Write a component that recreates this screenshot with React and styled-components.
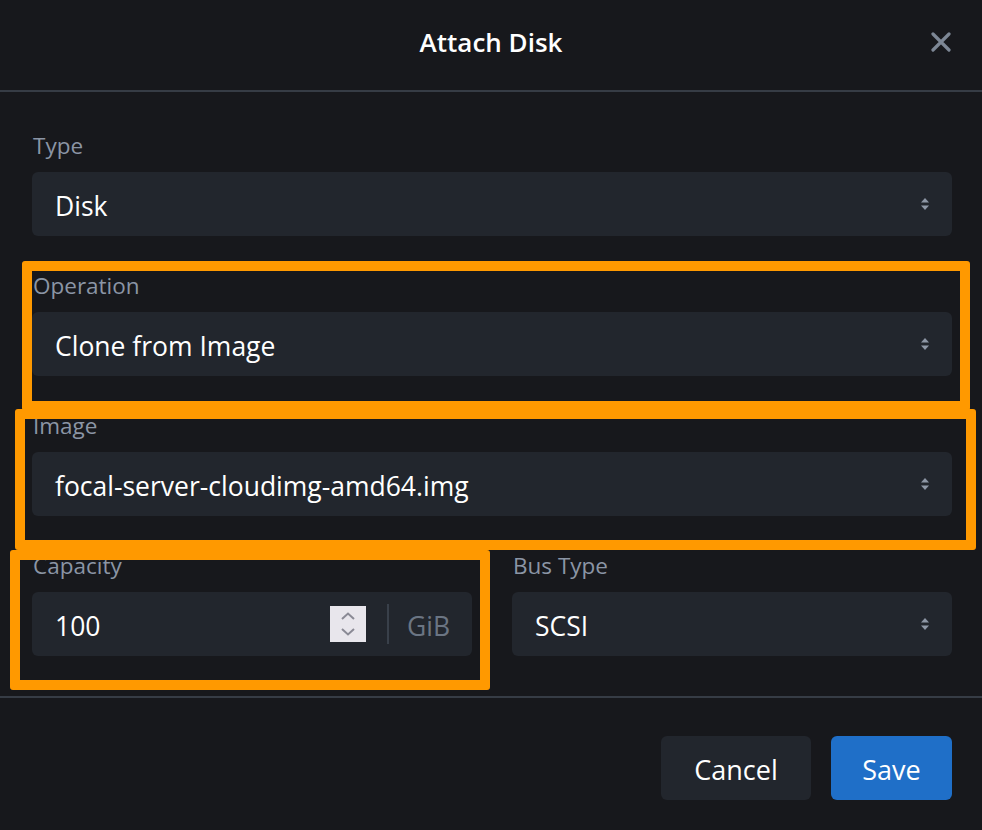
import React from "react";
import styled, { createGlobalStyle } from "styled-components";

const GlobalStyle = createGlobalStyle`
  html, body {
    margin: 0;
    padding: 0;
    background: #17181c;
  }
  body {
    font-family: "Open Sans", "Noto Sans", sans-serif;
    color: #ffffff;
  }
`;

const Modal = styled.div`
  position: relative;
  width: 982px;
  height: 830px;
  background: #17181c;
  display: flex;
  flex-direction: column;
`;

const Header = styled.div`
  display: flex;
  align-items: center;
  justify-content: center;
  position: relative;
  border-bottom: 2px solid #363c45;
  box-sizing: border-box;
  height: 92px;
  padding-bottom: 6px;
`;

const Title = styled.h2`
  margin: 0;
  font-size: 26px;
  line-height: 32px;
  font-weight: 600;
  color: #ffffff;
`;

const CloseButton = styled.button`
  position: absolute;
  right: 30px;
  top: 31px;
  width: 22px;
  height: 22px;
  padding: 0;
  border: none;
  background: none;
  display: flex;
  align-items: center;
  justify-content: center;
`;

const Body = styled.div`
  padding: 42px 30px 40px 32px;
  display: flex;
  flex-direction: column;
  gap: 38px;
  border-bottom: 2px solid #363c45;
`;

const Row = styled.div`
  display: grid;
  grid-template-columns: 1fr 1fr;
  gap: 40px;
`;

const Field = styled.div`
  display: flex;
  flex-direction: column;
`;

const Label = styled.label`
  font-size: 22.5px;
  line-height: 24px;
  color: #8b95a5;
  margin-bottom: 14px;
  padding-left: 1px;
`;

const Control = styled.div`
  height: 64px;
  background: #22262d;
  border-radius: 6px;
  display: flex;
  align-items: center;
  padding: 0 22px 0 23px;
  box-sizing: border-box;
`;

const Value = styled.span`
  flex: 1;
  font-size: 26.5px;
  line-height: 32px;
  padding-top: 3px;
  color: #ffffff;
`;

const Spinner = styled.div`
  width: 36px;
  height: 36px;
  background: #e8e6ec;
  display: flex;
  align-items: center;
  justify-content: center;
  margin-right: 21px;
`;

const Divider = styled.div`
  width: 2px;
  height: 40px;
  background: #39404a;
  margin-right: 18px;
`;

const Unit = styled.span`
  font-size: 26.5px;
  line-height: 32px;
  padding-top: 3px;
  color: #6b7583;
`;

const Footer = styled.div`
  flex: 1;
  display: flex;
  justify-content: flex-end;
  align-items: flex-start;
  gap: 20px;
  padding: 38px 30px 0 0;
`;

const Button = styled.button`
  height: 64px;
  padding: 2px 0 0;
  width: ${(p) => (p.primary ? "121px" : "150px")};
  border: none;
  border-radius: 6px;
  font-family: inherit;
  font-size: 27px;
  color: #ffffff;
  background: ${(p) => (p.primary ? "#1f6fc8" : "#22262d")};
`;

const Highlight = styled.div`
  position: absolute;
  border: 10px solid #ff9900;
  border-radius: 3px;
  box-sizing: border-box;
  pointer-events: none;
`;

const SelectArrows = () => (
  <svg width="10" height="14" viewBox="0 0 10 14">
    <path d="M5 1 L9 5.5 L1 5.5 Z" fill="#8e97a6" />
    <path d="M5 13 L9 8.5 L1 8.5 Z" fill="#8e97a6" />
  </svg>
);

const SelectField = ({ label, value }) => (
  <Field>
    <Label>{label}</Label>
    <Control>
      <Value>{value}</Value>
      <SelectArrows />
    </Control>
  </Field>
);

const highlights = [
  { left: 22, top: 261, width: 948, height: 150 },
  { left: 15, top: 409, width: 961, height: 141 },
  { left: 10, top: 550, width: 480, height: 140 },
];

export default function App() {
  return (
    <Modal>
      <GlobalStyle />
      <Header>
        <Title>Attach Disk</Title>
        <CloseButton aria-label="Close">
          <svg width="20" height="20" viewBox="0 0 20 20">
            <path
              d="M2 2 L18 18 M18 2 L2 18"
              stroke="#7d8795"
              strokeWidth="3.2"
              strokeLinecap="round"
            />
          </svg>
        </CloseButton>
      </Header>
      <Body>
        <SelectField label="Type" value="Disk" />
        <SelectField label="Operation" value="Clone from Image" />
        <SelectField label="Image" value="focal-server-cloudimg-amd64.img" />
        <Row>
          <Field>
            <Label>Capacity</Label>
            <Control>
              <Value>100</Value>
              <Spinner>
                <svg width="16" height="26" viewBox="0 0 16 26">
                  <path
                    d="M2 8 L8 2.5 L14 8 M2 18 L8 23.5 L14 18"
                    stroke="#8a8a95"
                    strokeWidth="2"
                    fill="none"
                  />
                </svg>
              </Spinner>
              <Divider />
              <Unit>GiB</Unit>
            </Control>
          </Field>
          <SelectField label="Bus Type" value="SCSI" />
        </Row>
      </Body>
      <Footer>
        <Button>Cancel</Button>
        <Button primary>Save</Button>
      </Footer>
      {highlights.map((h, i) => (
        <Highlight
          key={i}
          style={{ left: h.left, top: h.top, width: h.width, height: h.height }}
        />
      ))}
    </Modal>
  );
}
